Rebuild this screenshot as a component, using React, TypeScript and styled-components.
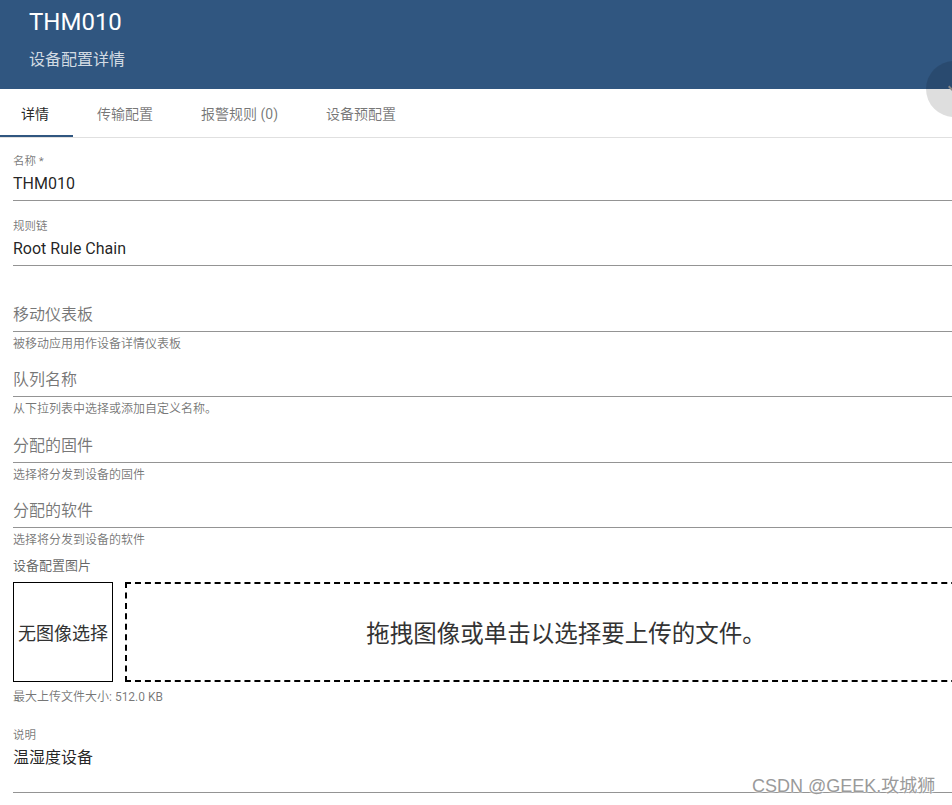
import React from "react";
import styled, { createGlobalStyle } from "styled-components";

const GlobalStyle = createGlobalStyle`
  html, body {
    margin: 0;
    padding: 0;
    background: #ffffff;
    overflow: hidden;
  }
  body {
    font-family: Roboto, "Noto Sans CJK SC", sans-serif;
  }
`;

type FieldProps = {
  label?: string;
  value?: string;
  placeholder?: string;
  hint?: string;
  multiline?: boolean;
};

const TABS = ["详情", "传输配置", "报警规则 (0)", "设备预配置"];

function Field({ label, value, placeholder, hint, multiline }: FieldProps) {
  return (
    <StyledField>
      <StyledLabel>{label}</StyledLabel>
      <StyledInput $multiline={multiline} $empty={!value}>
        {value || placeholder}
      </StyledInput>
      {!multiline && <StyledHint>{hint}</StyledHint>}
    </StyledField>
  );
}

export default function App() {
  return (
    <StyledPage>
      <GlobalStyle />
      <StyledHeader>
        <StyledTitle>THM010</StyledTitle>
        <StyledSubtitle>设备配置详情</StyledSubtitle>
      </StyledHeader>
      <StyledFab>
        <svg width="24" height="24" viewBox="0 0 24 24">
          <path d="M16.59 8.59 12 13.17 7.41 8.59 6 10l6 6 6-6z" fill="#8a8a8a" />
        </svg>
      </StyledFab>
      <StyledTabs>
        {TABS.map((tab, i) => (
          <StyledTab key={tab} $active={i === 0}>
            {tab}
          </StyledTab>
        ))}
      </StyledTabs>
      <StyledForm>
        <Field label="名称 *" value="THM010" />
        <Field label="规则链" value="Root Rule Chain" />
        <Field placeholder="移动仪表板" hint="被移动应用用作设备详情仪表板" />
        <Field placeholder="队列名称" hint="从下拉列表中选择或添加自定义名称。" />
        <Field placeholder="分配的固件" hint="选择将分发到设备的固件" />
        <Field placeholder="分配的软件" hint="选择将分发到设备的软件" />

        <StyledSectionLabel>设备配置图片</StyledSectionLabel>
        <StyledUploadRow>
          <StyledPreview>无图像选择</StyledPreview>
          <StyledDropZone>拖拽图像或单击以选择要上传的文件。</StyledDropZone>
        </StyledUploadRow>
        <StyledMaxSize>最大上传文件大小: 512.0 KB</StyledMaxSize>

        <StyledDescription>
          <Field label="说明" value="温湿度设备" multiline />
        </StyledDescription>
      </StyledForm>
      <StyledWatermark>CSDN @GEEK.攻城狮</StyledWatermark>
    </StyledPage>
  );
}

const StyledPage = styled.div`
  position: relative;
  width: 1020px;
  min-height: 805px;
  background: #ffffff;
`;

const StyledHeader = styled.header`
  box-sizing: border-box;
  height: 89px;
  padding: 8px 29px 0;
  background: #305680;
`;

const StyledTitle = styled.h1`
  margin: 0;
  font-size: 24px;
  line-height: 28px;
  font-weight: 400;
  color: #ffffff;
`;

const StyledSubtitle = styled.div`
  margin-top: 14px;
  font-size: 16px;
  line-height: 20px;
  color: rgba(255, 255, 255, 0.8);
`;

const StyledFab = styled.div`
  position: absolute;
  left: 926px;
  top: 61px;
  width: 56px;
  height: 56px;
  border-radius: 50%;
  background: rgba(0, 0, 0, 0.13);
  display: flex;
  align-items: center;
  justify-content: center;
`;

const StyledTabs = styled.nav`
  display: flex;
  height: 48px;
  margin-left: -3px;
  border-bottom: 1px solid #e0e0e0;
`;

const StyledTab = styled.div<{ $active?: boolean }>`
  display: flex;
  align-items: center;
  padding: 0 24px;
  font-size: 14px;
  color: ${({ $active }) => ($active ? "rgba(0, 0, 0, 0.87)" : "rgba(0, 0, 0, 0.54)")};
  box-shadow: ${({ $active }) => ($active ? "inset 0 -2px 0 #305680" : "none")};
`;

const StyledForm = styled.main`
  padding: 16px 13px 0;
`;

const StyledField = styled.div`
  display: flex;
  flex-direction: column;
`;

const StyledLabel = styled.div`
  height: 15px;
  font-size: 11.5px;
  line-height: 15px;
  color: rgba(0, 0, 0, 0.54);
`;

const StyledInput = styled.div<{ $multiline?: boolean; $empty?: boolean }>`
  margin-top: 3px;
  min-height: ${({ $multiline }) => ($multiline ? "42px" : "24px")};
  padding-bottom: 4px;
  font-size: 16px;
  line-height: 24px;
  color: ${({ $empty }) => ($empty ? "rgba(0, 0, 0, 0.54)" : "rgba(0, 0, 0, 0.87)")};
  border-bottom: 1px solid rgba(0, 0, 0, 0.42);
`;

const StyledHint = styled.div`
  box-sizing: border-box;
  height: 18.4px;
  padding-top: 6px;
  font-size: 12px;
  line-height: 12px;
  color: rgba(0, 0, 0, 0.54);
`;

const StyledSectionLabel = styled.div`
  margin-top: 12px;
  font-size: 13px;
  line-height: 16px;
  color: rgba(0, 0, 0, 0.62);
`;

const StyledUploadRow = styled.div`
  display: flex;
  gap: 12px;
  margin-top: 8px;
`;

const StyledPreview = styled.div`
  box-sizing: border-box;
  width: 100px;
  height: 100px;
  border: 1px solid #000000;
  display: flex;
  align-items: center;
  justify-content: center;
  font-size: 18px;
  color: #333333;
`;

const StyledDropZone = styled.div`
  box-sizing: border-box;
  flex: 1;
  height: 100px;
  border: 2px dashed #000000;
  display: flex;
  align-items: center;
  justify-content: center;
  font-size: 23.5px;
  color: #333333;
`;

const StyledMaxSize = styled.div`
  margin-top: 8px;
  font-size: 12px;
  line-height: 14px;
  color: rgba(0, 0, 0, 0.54);
`;

const StyledDescription = styled.div`
  margin-top: 24px;
`;

const StyledWatermark = styled.div`
  position: absolute;
  left: 752px;
  top: 775px;
  font-family: "Liberation Sans", "Noto Sans CJK SC", sans-serif;
  font-size: 18px;
  line-height: 22px;
  color: #9a9a9a;
  text-shadow: 0 0 2px #ffffff, 0 0 2px #ffffff;
`;
